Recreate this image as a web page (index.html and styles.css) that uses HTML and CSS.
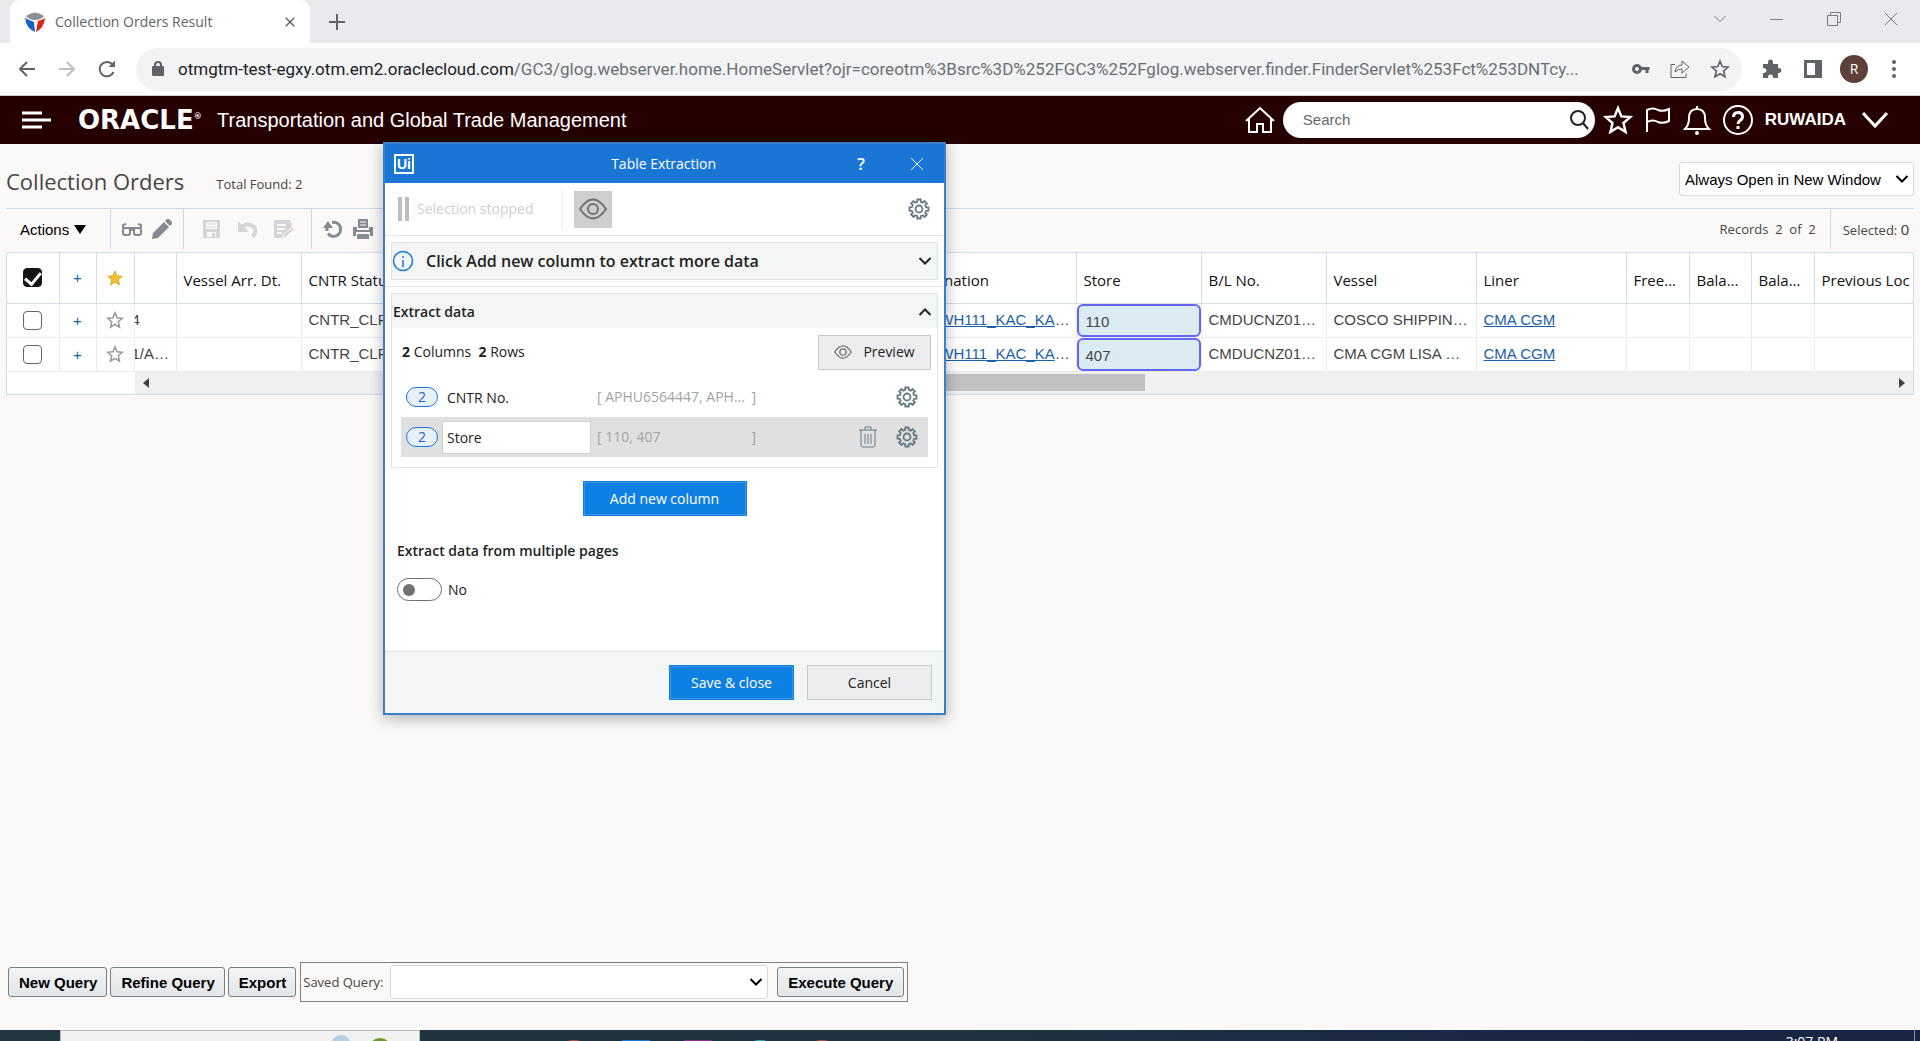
FILE: index.html
```html
<!DOCTYPE html>
<html lang="en">
<head>
<meta charset="utf-8">
<title>Collection Orders Result</title>
<link rel="stylesheet" href="styles.css">
</head>
<body>
<svg class="sprite" aria-hidden="true">
  <symbol id="star" viewBox="0 0 24 24"><path d="M12 2.500l2.700 6.600 7 .6-5.300 4.700 1.600 7L12 17.700 6 21.400l1.600-7L2.300 9.700l7-.6z"/></symbol>
  <symbol id="gear" viewBox="-12 -12 24 24"><path d="M7.760-1.940L10.340-1.820V1.820L7.760 1.940 6.860 4.120 8.600 6.020 6.020 8.600 4.120 6.860 1.940 7.760 1.820 10.340H-1.820L-1.940 7.760-4.120 6.860-6.020 8.600-8.600 6.020-6.860 4.120-7.760 1.940-10.340 1.820V-1.820L-7.760-1.940-6.860-4.120-8.600-6.020-6.020-8.600-4.120-6.860-1.940-7.760-1.820-10.340H1.820L1.940-7.760 4.120-6.860 6.020-8.600 8.600-6.020 6.860-4.120z"/><circle r="3.800"/></symbol>
  <symbol id="eye" viewBox="0 0 28 22"><path d="M1 11Q14-8 27 11 14 30 1 11z"/><circle cx="14" cy="11" r="5"/></symbol>
  <symbol id="down" viewBox="0 0 14 14"><path d="M1.500 4L7 9.500 12.500 4"/></symbol>
  <symbol id="cross" viewBox="0 0 14 14"><path d="M1 1l12 12M13 1L1 13"/></symbol>
</svg>

<div class="tabs">
  <div class="tab">
    <svg class="favicon" viewBox="0 0 20 20"><path d="M1 4Q10-3 19 4 16 8 10 8 4 8 1 4z" fill="#8d9093"/><path d="M0 6Q4 8 9 10L10 20Q1 16 0 6z" fill="#1565c8"/><path d="M20 6Q17 8 13 9L11 20Q19 16 20 6z" fill="#e02020"/></svg>
    <span class="tab-title">Collection Orders Result</span>
    <button class="bare" aria-label="Close tab"><svg class="line s10" ><use href="#cross"/></svg></button>
  </div>
  <button class="bare new-tab" aria-label="New tab"><svg class="line s16" viewBox="0 0 16 16"><path d="M8 0v16M0 8h16"/></svg></button>
  <div class="window-controls">
    <svg class="line" width="14" height="14"><use href="#down"/></svg>
    <svg class="line" width="14" height="14"><path d="M0 7.500h13"/></svg>
    <svg class="line" width="14" height="14"><path d="M.5 3.500h10v10H.5zM3.500 3.500v-3h10v10h-3"/></svg>
    <svg class="line" width="14" height="14"><use href="#cross"/></svg>
  </div>
</div>

<div class="address-bar">
  <button class="bare" aria-label="Back"><svg class="line thick" width="18" height="16"><path d="M17 8H2M9 1L2 8l7 7"/></svg></button>
  <button class="bare off" aria-label="Forward"><svg class="line thick" width="18" height="16"><path d="M1 8h15M9 1l7 7-7 7"/></svg></button>
  <button class="bare" aria-label="Reload"><svg class="line thick" width="18" height="18"><path d="M15.500 12A7.200 7.200 0 1 1 14 4"/><path d="M17 .5V7h-6.500z" fill="#5f6368" stroke="none"/></svg></button>
  <div class="omnibox">
    <svg class="lock" width="12" height="16"><path d="M3 6V4a3 3 0 0 1 6 0v2" fill="none" stroke="#5f6368" stroke-width="2"/><rect y="5" width="12" height="10" rx="1" fill="#5f6368"/></svg>
    <span class="url"><b>otmgtm-test-egxy.otm.em2.oraclecloud.com</b>/GC3/glog.webserver.home.HomeServlet?ojr=coreotm%3Bsrc%3D%252FGC3%252Fglog.webserver.finder.FinderServlet%253Fct%253DNTcy...</span>
    <svg width="18" height="12" fill="none" stroke="#5f6368" stroke-width="3"><circle cx="5" cy="6" r="3.500"/><path d="M9 5.500h8.500M15 5v5"/></svg>
    <svg class="line" width="20" height="20"><path d="M5 5.500H1v13h15v-4M5 13q1-7 7-7V2l7 6-7 6v-4q-4 0-7 3z"/></svg>
    <svg class="line thick" width="20" height="20"><use href="#star"/></svg>
  </div>
  <svg width="20" height="20" fill="#5f6368"><path d="M1 5h5V3a2.500 2.500 0 0 1 5 0v2h5v4h1a2.500 2.500 0 0 1 0 5h-1v5h-5v-1a2.500 2.500 0 0 0-5 0v1H1v-5h1a2.500 2.500 0 0 0 0-5H1z"/></svg>
  <svg width="18" height="18"><path d="M1.500 1.500h15v15h-15z" fill="#fff" stroke="#5f6368" stroke-width="3"/><path d="M11 1h6v16h-6z" fill="#5f6368"/></svg>
  <span class="avatar">R</span>
  <svg width="4" height="18" fill="#5f6368"><circle cx="2" cy="2" r="2"/><circle cx="2" cy="9" r="2"/><circle cx="2" cy="16" r="2"/></svg>
</div>

<header class="app-header">
  <button class="bare" aria-label="Menu"><svg width="30" height="18" stroke="#fff" stroke-width="3"><path d="M0 2h20M0 9h29M0 16h20"/></svg></button>
  <span class="logo">ORACLE<sup>®</sup></span>
  <span class="app-name">Transportation and Global Trade Management</span>
  <svg class="icon home" width="30" height="28"><path d="M1 15L15 2l14 13M4 13v13h8v-8h6v8h8V13"/></svg>
  <label class="search"><input type="text" placeholder="Search" aria-label="Search"><svg width="20" height="20" fill="none" stroke="#222" stroke-width="2"><circle cx="9" cy="8" r="7"/><path d="M14 13l5 6"/></svg></label>
  <svg class="icon" width="30" height="30"><use href="#star"/></svg>
  <svg class="icon" width="26" height="26"><path d="M2 25V3q6-3 11 0 5 2 11-1v12q-6 3-11 1-5-3-11 0"/></svg>
  <svg class="icon" width="28" height="30"><path d="M2 24q4-4 4-11 0-9 8-9t8 9q0 7 4 11zM14 4V1"/><circle cx="14" cy="28" r="1"/></svg>
  <svg class="icon" width="30" height="30"><circle cx="15" cy="15" r="14"/><path d="M10.500 12q0-4.500 4.500-4.500t4.500 4q0 2.500-2.500 4-2 1.200-2 3.500M15 21v3" stroke-width="3"/></svg>
  <span class="user">RUWAIDA</span>
  <svg class="icon more" width="26" height="16"><path d="M1 1l12 13L25 1" stroke-width="3"/></svg>
</header>

<main>
  <div class="title-row">
    <h1>Collection Orders</h1>
    <span class="total">Total Found: 2</span>
    <div class="drop"><select aria-label="Open mode"><option>Always Open in New Window</option></select><svg width="14" height="14"><use href="#down"/></svg></div>
  </div>

  <div class="toolbar">
    <button class="bare actions">Actions <svg width="12" height="9"><path d="M0 0h12L6 9z"/></svg></button>
    <div class="group">
      <svg width="20" height="20" fill="none" stroke="#848a8f" stroke-width="2"><rect x="1" y="9" width="7" height="7" rx="2"/><rect x="12" y="9" width="7" height="7" rx="2"/><path d="M8 11h4M1 9V6l3-1M19 9V6l-3-1M1 9h18"/></svg>
      <svg width="20" height="20" fill="#848a8f"><path d="M0 20l1-6L12 3l5 5L6 19zM13 2l2-2h2l3 3v2l-2 2z"/></svg>
    </div>
    <div class="group wide">
      <svg width="20" height="20"><path d="M1 1h17v18H1z" fill="#d3d5d6"/><path d="M4 3h11v7H4zM5 13h9v5H5z" fill="#faf9f7"/><path d="M5 5h9M5 8h9" stroke="#d3d5d6"/><path d="M10 14h3v4h-3z" fill="#d3d5d6"/></svg>
      <svg width="20" height="20" fill="none" stroke="#d3d5d6" stroke-width="4"><path d="M3 8q8-5 13 0 3 4-1 10"/><path d="M0 2v11h11z" fill="#d3d5d6" stroke="none"/></svg>
      <svg width="20" height="20"><path d="M0 1h16l2 6-6 12H0z" fill="#d3d5d6"/><path d="M3 6h9M3 10h8M3 14h5" stroke="#faf9f7" stroke-width="2"/><path d="M9 19l1-4 9-7 1 2-8 8z" fill="#d3d5d6" stroke="#faf9f7"/></svg>
    </div>
    <div class="group">
      <svg width="20" height="20" fill="none" stroke="#848a8f" stroke-width="3"><path d="M9 3.500a7 7 0 1 1-4 11M4 12V7"/><path d="M0 9l5-7 5 7z" fill="#848a8f" stroke="none"/></svg>
      <svg width="20" height="20" fill="#848a8f"><path d="M5 0h10v9H5zM0 8h4v3h12V8h4v9h-3v-4H3v4H0zM4 15h12v5H4z"/><path d="M7 3h6M7 6h6" stroke="#faf9f7"/></svg>
    </div>
    <span class="records">Records&nbsp; 2&nbsp; of&nbsp; 2</span>
    <span class="selected">Selected: <span class="count">0</span></span>
  </div>

  <div class="grid">
    <table>
      <colgroup><col class="w52"><col class="w37"><col class="w38"><col class="w42"><col class="w125"><col class="w200"><col class="w400"><col class="w175"><col class="w125"><col class="w125"><col class="w150"><col class="w150"><col class="w63"><col class="w62"><col class="w63"><col></colgroup>
      <thead>
        <tr><th class="c"><input type="checkbox" checked aria-label="Select all"></th><th class="c plus">+</th><th class="c"><svg class="gold" width="18" height="18"><use href="#star"/></svg></th><th></th><th>Vessel Arr. Dt.</th><th>CNTR Status</th><th>CNTR No.</th><th>Destination</th><th>Store</th><th>B/L No.</th><th>Vessel</th><th>Liner</th><th class="clip">Free...</th><th class="clip">Bala...</th><th class="clip">Bala...</th><th class="clip">Previous Loc</th></tr>
      </thead>
      <tbody>
        <tr><td class="c"><input type="checkbox" aria-label="Select order 110"></td><td class="c plus">+</td><td class="c"><svg class="hollow" width="18" height="18"><use href="#star"/></svg></td><td class="cut">4</td><td></td><td>CNTR_CLR</td><td></td><td class="clip"><a href="#">KACWH111_KAC_KA</a>…</td><td class="pick"><div>110</div></td><td>CMDUCNZ01…</td><td>COSCO SHIPPIN…</td><td><a href="#">CMA CGM</a></td><td></td><td></td><td></td><td></td></tr>
        <tr><td class="c"><input type="checkbox" aria-label="Select order 407"></td><td class="c plus">+</td><td class="c"><svg class="hollow" width="18" height="18"><use href="#star"/></svg></td><td class="cut">1/A…</td><td></td><td>CNTR_CLR</td><td></td><td class="clip"><a href="#">KACWH111_KAC_KA</a>…</td><td class="pick"><div>407</div></td><td>CMDUCNZ01…</td><td>CMA CGM LISA …</td><td><a href="#">CMA CGM</a></td><td></td><td></td><td></td><td></td></tr>
      </tbody>
    </table>
    <div class="scrollbar">
      <svg width="6" height="10"><path d="M6 0v10L0 5z"/></svg>
      <div class="thumb"></div>
      <svg class="end" width="6" height="10"><path d="M0 0v10l6-5z"/></svg>
    </div>
  </div>

  <div class="query-bar">
    <button class="push">New Query</button>
    <button class="push">Refine Query</button>
    <button class="push">Export</button>
    <div class="saved">
      <label for="saved">Saved Query:</label>
      <div class="drop"><select id="saved"><option></option></select><svg width="14" height="14"><use href="#down"/></svg></div>
      <button class="push">Execute Query</button>
    </div>
  </div>
</main>

<footer class="taskbar">
  <div class="task-search"><span class="cloud"></span><span class="globe"></span></div>
  <div class="apps"><i class="red"></i><i class="blue"></i><i class="purple"></i><i class="teal"></i><i class="red"></i></div>
  <span class="clock">3:07 PM</span>
</footer>

<section class="dialog" role="dialog" aria-label="Table Extraction">
  <div class="dialog-title">
    <span class="ui-logo">Ui</span>
    <span class="caption">Table Extraction</span>
    <button class="bare help" aria-label="Help">?</button>
    <button class="bare" aria-label="Close"><svg width="14" height="14" fill="none" stroke="#fff"><use href="#cross"/></svg></button>
  </div>
  <div class="dialog-tools">
    <svg width="12" height="24" fill="#bdbdbd"><path d="M0 0h4v24H0zM7 0h4v24H7z"/></svg>
    <span class="state">Selection stopped</span>
    <button class="eye-button" aria-label="Show highlights"><svg class="eye" width="28" height="22"><use href="#eye"/></svg></button>
    <svg class="gear" width="22" height="22"><use href="#gear"/></svg>
  </div>
  <div class="hint-wrap">
    <div class="hint">
      <svg width="22" height="22" fill="none" stroke="#1a76d5"><circle cx="11" cy="11" r="9.500" stroke-width="1.500"/><path d="M11 6v2M11 10v7" stroke-width="1.500"/></svg>
      <strong>Click Add new column to extract more data</strong>
      <svg class="chev" width="14" height="14"><use href="#down"/></svg>
    </div>
  </div>
  <div class="extract">
    <div class="extract-head"><strong>Extract data</strong><svg class="chev up" width="14" height="14"><use href="#down"/></svg></div>
    <div class="summary"><span><b>2</b> Columns&nbsp; <b>2</b> Rows</span><button class="plain preview"><svg class="eye" width="18" height="14"><use href="#eye"/></svg>Preview</button></div>
    <div class="column"><span class="badge">2</span><span class="name">CNTR No.</span><span class="sample"><span>[ APHU6564447, APH...</span><span>]</span></span><svg class="gear" width="22" height="22"><use href="#gear"/></svg></div>
    <div class="column current"><span class="badge">2</span><input class="name" type="text" value="Store" aria-label="Column name"><span class="sample"><span>[ 110, 407</span><span>]</span></span><svg class="trash" width="18" height="22"><path d="M0 4h18M6 4V1h6v3M2 4v15q0 2 2 2h10q2 0 2-2V4M6 8v10M9 8v10M12 8v10"/></svg><svg class="gear" width="22" height="22"><use href="#gear"/></svg></div>
  </div>
  <button class="primary add">Add new column</button>
  <strong class="multi">Extract data from multiple pages</strong>
  <label class="toggle"><input type="checkbox">No</label>
  <div class="dialog-foot"><button class="primary">Save &amp; close</button><button class="plain">Cancel</button></div>
</section>
</body>
</html>
```
FILE: styles.css
```css
* { box-sizing: border-box; }
body {
  margin: 0;
  height: 100vh;
  overflow: hidden;
  display: flex;
  flex-direction: column;
  position: relative;
  background: #faf9f7;
  color: #454545;
  font: 14px/20px "Open Sans", "Noto Sans", sans-serif;
}
svg { flex: none; display: block; }
button, input, select { font: inherit; color: inherit; }
.sprite { position: absolute; width: 0; height: 0; }
.bare { background: none; border: 0; padding: 0; display: flex; align-items: center; }
.line { fill: none; stroke: #5f6368; }
.thick { stroke-width: 2; }
.s10 { width: 10px; height: 10px; stroke-width: 2; }
.s16 { width: 16px; height: 16px; stroke-width: 2; }

/* Browser tabs */
.tabs { height: 43px; flex: none; display: flex; align-items: center; background: #e8eaed; padding-left: 10px; }
.tab { align-self: stretch; width: 300px; display: flex; align-items: center; gap: 10px; padding: 0 15px; background: #fff; border-radius: 10px 10px 0 0; color: #5f6368; }
.favicon { width: 20px; height: 20px; }
.tab-title { flex: 1; }
.new-tab { margin-left: 19px; }
.window-controls { margin: 0 22px 6px auto; display: flex; gap: 43px; opacity: .8; }

/* Address bar */
.address-bar { height: 53px; flex: none; display: flex; align-items: center; gap: 22px; background: #fff; border-bottom: 1px solid #d0d0d2; padding: 0 26px 0 18px; }
.off { opacity: .4; }
.omnibox { flex: 1; min-width: 0; height: 43px; display: flex; align-items: center; gap: 20px; border-radius: 22px; background: #f1f3f4; padding: 0 12px 0 16px; margin-right: -2px; margin-left: -2px; }
.url { flex: 1; min-width: 0; overflow: hidden; text-overflow: ellipsis; white-space: nowrap; font: 17px/24px Roboto, "Open Sans", sans-serif; color: #6c6f72; margin: 0 8px 0 -6px; }
.url b { font-weight: 400; color: #202124; }
.avatar { width: 28px; height: 28px; border-radius: 50%; background: #5d4037; color: #fff; text-align: center; line-height: 28px; margin: 0 2px 0 -4px; }
.address-bar { padding-right: 24px; }

/* Application header */
.app-header { height: 48px; flex: none; display: flex; align-items: center; background: #260000; color: #fff; padding: 0 32px 0 22px; gap: 12px; font-family: "Liberation Sans", Arial, sans-serif; }
.logo { width: 127px; margin-left: 14px; font: bold 26px/26px "DejaVu Sans", sans-serif; white-space: nowrap; }
.logo sup { font-size: 8px; vertical-align: 10px; line-height: 8px; }
.app-name { font-size: 20px; flex: 1; }
.icon { fill: none; stroke: #fff; stroke-width: 2; }
.home { margin-right: -4px; }
.search { width: 312px; height: 36px; border-radius: 18px; background: #fff; display: flex; align-items: center; padding: 0 6px 0 18px; margin-right: -4px; }
.search input { flex: 1; min-width: 0; border: 0; outline: 0; background: none; font-size: 15px; }
.search input::placeholder { color: #666; opacity: 1; }
.user { font-size: 17px; font-weight: 700; }
.more { margin-left: 4px; }

/* Page */
main { flex: 1; min-height: 0; display: flex; flex-direction: column; padding: 18px 6px 28px; }
.title-row { height: 46px; display: flex; align-items: center; padding-bottom: 12px; }
h1 { font-size: 22px; line-height: 30px; font-weight: 500; margin: 4px 32px 0 0; }
.total { margin-top: 9px; font-size: 13px; font-weight: 500; }
.title-row .drop { width: 235px; margin-left: auto; }
.drop { display: grid; align-items: center; height: 34px; border: 1px solid #d9d9d9; border-radius: 3px; background: #fff; color: #000; }
.drop > * { grid-area: 1 / 1; }
.drop svg { justify-self: end; margin-right: 4px; fill: none; stroke: #000; stroke-width: 2; pointer-events: none; }
select { appearance: none; width: 100%; height: 100%; border: 0; background: none; padding: 0 5px; font: 15px "Liberation Sans", Arial, sans-serif; }
.toolbar { height: 44px; flex: none; display: flex; align-items: stretch; border-top: 1px solid #cddae4; padding-bottom: 3px; }
.actions { width: 104px; padding-left: 14px; gap: 5px; color: #000; font: 15px "Liberation Sans", Arial, sans-serif; }
.group { display: flex; align-items: center; gap: 10px; border-left: 1px solid #cddae4; padding: 0 11px; }
.group.wide { gap: 16px; padding: 0 17px 0 18px; }
.records { margin-left: auto; padding: 10px 14px 0 0; font-size: 13px; font-weight: 500; }
.selected { border-left: 1px solid #cddae4; padding: 11px 5px 0 12px; font-size: 13px; }
.count { font: 15px/15px "Liberation Sans", Arial, sans-serif; }

/* Orders grid */
.grid { border: 1px solid #d3dde4; background: #fff; flex: none; }
table { table-layout: fixed; width: 100%; border-collapse: collapse; }
.w37 { width: 37px; } .w38 { width: 38px; } .w42 { width: 42px; } .w52 { width: 52px; }
.w62 { width: 62px; } .w63 { width: 63px; } .w125 { width: 125px; } .w150 { width: 150px; }
.w175 { width: 175px; } .w200 { width: 200px; } .w400 { width: 400px; }
th, td { padding: 0 7px; text-align: left; white-space: nowrap; overflow: hidden; text-overflow: ellipsis; border-right: 1px solid #ebebeb; border-bottom: 1px solid #ebebeb; }
th { height: 50px; padding-top: 4px; font-size: 15px; font-weight: 500; color: #111; border-color: #d3dde4; }
td { height: 34px; font: 15px/18px "Liberation Sans", Arial, sans-serif; }
th:last-child, td:last-child { border-right: 0; }
.clip { text-overflow: clip; padding-right: 0; }
.c { padding: 0; text-align: center; text-overflow: clip; }
.c svg { margin: 0 auto; }
.c input { appearance: none; display: block; margin: 0 auto; width: 19px; height: 19px; border: 1px solid #666; border-radius: 4px; }
.c input:checked { background: #161513; border-color: #161513; }
.c input:checked::after { content: ""; display: block; width: 7px; height: 13px; margin: 0 auto; border: solid #fff; border-width: 0 3px 3px 0; transform: rotate(40deg); }
.plus { color: #1b61a8; font: 15px "Liberation Sans", Arial, sans-serif; }
.gold { fill: #f5c02e; stroke: #d09c1a; }
.hollow { fill: none; stroke: #999; stroke-width: 2; }
.cut { padding: 0; text-indent: -3px; }
a { color: #1b61a8; }
.pick { padding: 0; }
.pick div { height: 33px; border: 2px solid #6464f5; border-radius: 6px; background: #daebf2; padding: 7px 7px 0; }
.scrollbar { height: 22px; margin-left: 128px; display: flex; align-items: center; background: #f0f0f0; padding: 0 8px; fill: #444; }
.thumb { height: 17px; width: 640px; margin-left: 356px; background: #c1c1c1; }
.end { margin-left: auto; }

/* Query bar */
.query-bar { margin-top: auto; display: flex; align-items: center; gap: 3px; padding-left: 2px; }
.push { height: 30px; padding: 0 10px; border: 1px solid #7a7f82; border-radius: 3px; background: linear-gradient(#f3f5f6, #e2e6e9); color: #000; font: bold 15px "Liberation Sans", Arial, sans-serif; white-space: nowrap; }
.query-bar > .push { padding: 0 9px 0 10px; }
.saved { width: 608px; height: 40px; display: flex; align-items: center; border: 1px solid #808080; padding: 0 3px 0 2px; margin-left: 1px; font-size: 13px; }
.saved label { width: 87px; white-space: nowrap; }
.saved .drop { flex: 1; margin-right: 9px; }

/* Taskbar */
.taskbar { height: 11px; flex: none; overflow: hidden; display: flex; align-items: flex-start; background: linear-gradient(90deg, #213540, #1f3340 50%, #1a2744 80%, #182541); padding: 0 5px 0 60px; color: #fff; }
.task-search { width: 360px; height: 40px; display: flex; gap: 18px; background: #f1f1f1; border: 1px solid #bbb; padding: 4px 0 0 270px; }
.cloud { width: 20px; height: 20px; border-radius: 50%; background: #b4d2e4; }
.globe { width: 22px; height: 20px; border-radius: 50%; background: #6c9c2e; margin-top: 3px; }
.apps { display: flex; gap: 34px; padding: 10px 0 0 140px; }
.apps i { width: 28px; height: 20px; border-radius: 50%; }
.apps .red { background: #c0504b; }
.apps .blue { background: #1976d2; border-radius: 0; }
.apps .purple { background: #8a2f8a; border-radius: 0; }
.apps .teal { background: #35b8c4; }
.clock { margin-left: auto; height: 30px; border-right: 1px solid #8a91a0; padding: 2px 76px 0 0; }

/* Table extraction dialog */
.dialog { position: absolute; left: 383px; top: 142px; width: 563px; display: flex; flex-direction: column; background: #fff; border: 2px solid #3a7fcb; color: #222; box-shadow: 0 3px 14px rgba(0, 0, 0, .3); }
.dialog-title { height: 39px; display: flex; align-items: center; background: #1a76d5; color: #fff; padding: 0 20px 0 9px; }
.dialog-title .bare { color: #fff; }
.ui-logo { width: 20px; height: 20px; border: 2px solid #fff; font: bold 14px/16px "Liberation Sans", Arial, sans-serif; text-align: center; }
.caption { flex: 1; text-align: center; padding-left: 56px; }
.help { font-size: 17px; font-weight: 600; margin-right: 45px; }
.dialog-tools { height: 53px; display: flex; align-items: center; border-bottom: 1px solid #e3e4e4; padding: 0 14px 0 13px; }
.state { width: 146px; height: 40px; line-height: 40px; border-right: 1px solid #eee; color: #cfcfcf; margin: 0 11px 0 7px; }
.eye-button { width: 38px; height: 37px; padding: 0; border: 0; background: #cfcfcf; display: grid; place-items: center; }
.eye { fill: none; stroke: #707070; stroke-width: 2; }
.gear, .trash { fill: none; stroke: #6a7a84; stroke-width: 2; }
.trash { stroke-width: 1; }
.dialog-tools .gear { margin-left: auto; }
strong { font-weight: 600; }
.hint-wrap { padding: 6px; border-bottom: 1px solid #e3e4e4; }
.hint { height: 38px; display: flex; align-items: center; gap: 12px; border: 1px solid #e3e4e4; background: #f4f6f6; }
.hint strong { font-size: 16px; }
.chev { margin: 0 5px 0 auto; fill: none; stroke: #222; stroke-width: 2; }
.up { transform: scaleY(-1); }
.extract { margin: 6px; height: 175px; border: 1px solid #e3e4e4; }
.extract-head { height: 34px; display: flex; align-items: center; background: #f4f6f6; padding: 2px 0 0 1px; }
.summary { height: 48px; display: flex; align-items: center; justify-content: space-between; padding: 0 6px 0 10px; }
.plain, .primary { height: 35px; border: 1px solid #c8c8cc; background: #ededef; padding: 0; }
.primary { border: 1px solid #0f80e3; outline: 1px solid #3a93e4; outline-offset: -2px; background: #0f80e3; color: #fff; }
.preview { width: 113px; display: flex; align-items: center; justify-content: center; gap: 11px; }
.preview .eye { stroke-width: 2; }
.column { height: 40px; margin: 0 9px; display: flex; align-items: center; padding: 0 10px 0 5px; }
.current { background: #e0e0e0; }
.summary + .column { margin-top: 1px; }
.badge { width: 32px; height: 20px; border: 1px solid #1a76d5; border-radius: 10px; background: #e8f1fb; color: #1a66b8; text-align: center; line-height: 18px; }
.name { width: 149px; height: 33px; line-height: 31px; margin-left: 4px; padding: 0 4px; border: 1px solid transparent; }
input.name { background: #fff; border-color: #d0d0d0; }
.sample { width: 159px; display: flex; justify-content: space-between; color: #a3a3a3; margin: 0 auto 0 6px; }
.trash { margin-right: 19px; }
.add { width: 164px; align-self: center; margin-top: 7px; }
.multi { font-size: 14px; margin: 25px 12px 0; }
.toggle { display: flex; align-items: center; gap: 6px; margin: 17px 12px 50px; }
.toggle input { appearance: none; width: 45px; height: 23px; margin: 0; border: 1px solid #707074; border-radius: 12px; display: flex; align-items: center; padding-left: 5px; }
.toggle input::before { content: ""; width: 12px; height: 12px; border-radius: 50%; background: #707074; }
.dialog-foot { height: 62px; display: flex; justify-content: flex-end; align-items: center; gap: 13px; border-top: 1px solid #e3e4e4; background: #f4f6f6; padding-right: 12px; }
.dialog-foot button { width: 125px; }
```
